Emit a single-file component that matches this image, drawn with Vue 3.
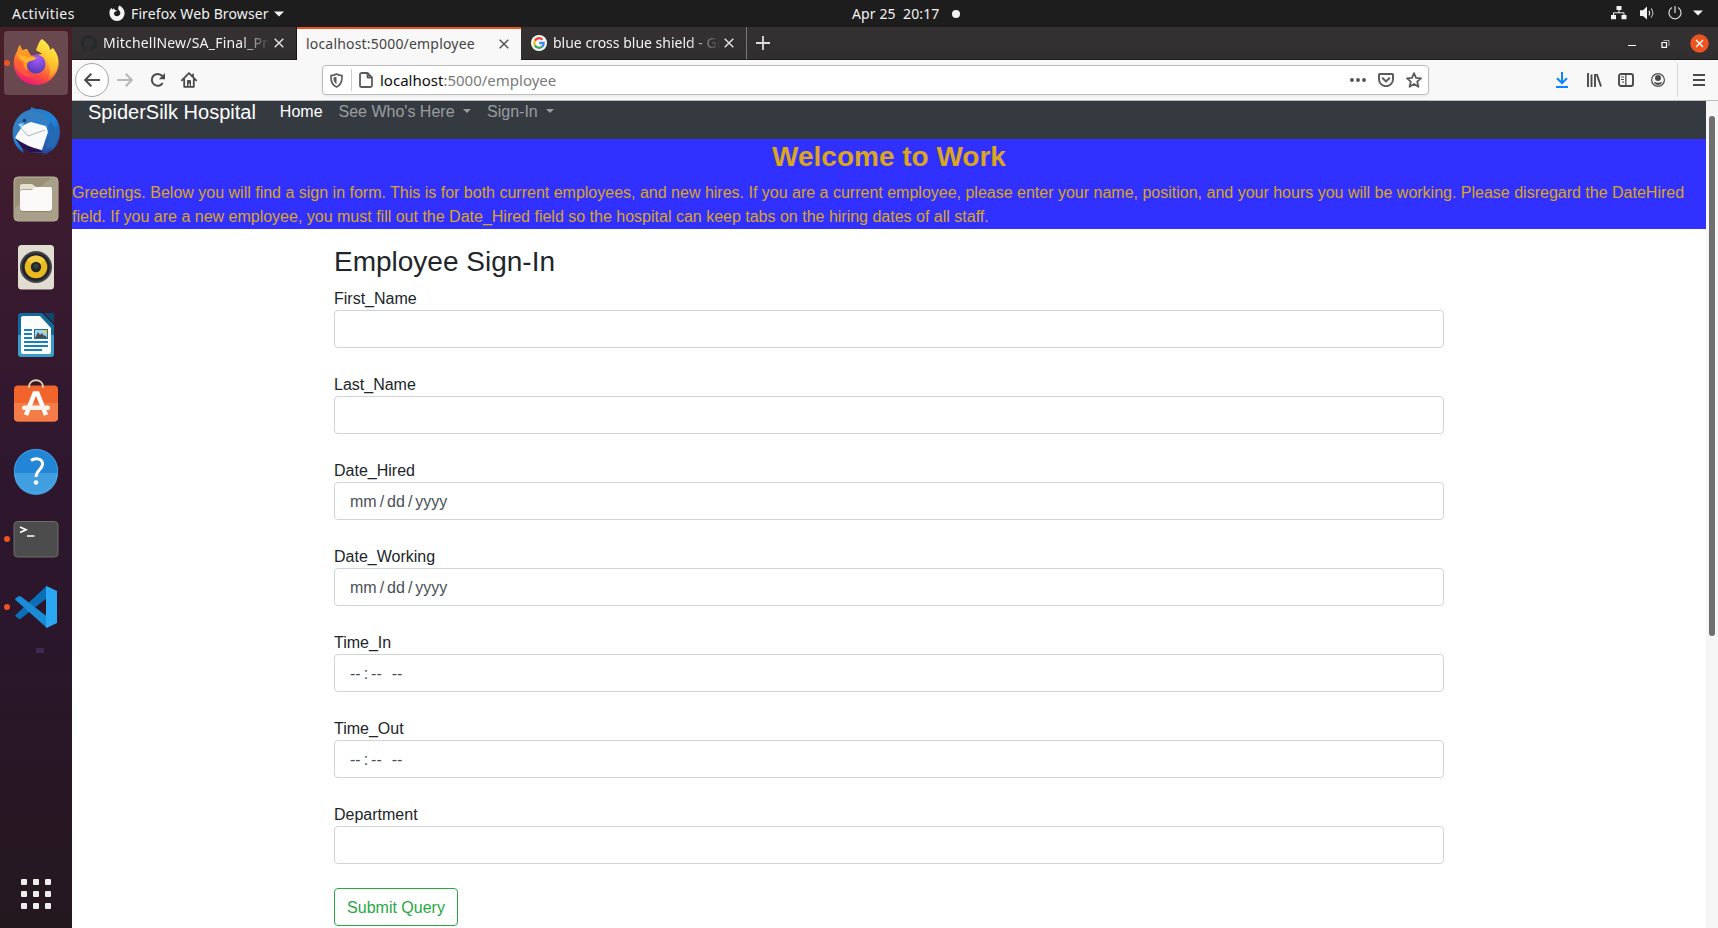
<script setup>
const fields = [
  { label: 'First_Name', parts: [] },
  { label: 'Last_Name', parts: [] },
  { label: 'Date_Hired', parts: ['mm', '/', 'dd', '/', 'yyyy'] },
  { label: 'Date_Working', parts: ['mm', '/', 'dd', '/', 'yyyy'] },
  { label: 'Time_In', parts: ['--', ':', '--', '', '--'] },
  { label: 'Time_Out', parts: ['--', ':', '--', '', '--'] },
  { label: 'Department', parts: [] },
]
</script>

<template>
  <div class="desktop">
    <header class="topbar">
      <span class="activities">Activities</span>
      <svg class="ff-mono" width="16" height="16" viewBox="0 0 16 16">
        <path d="M10.6 0.6C12.2 1.7 15.6 4 15.6 8.3A7.6 7.6 0 0 1 .4 8.3C.4 5.4 1.4 4 2.4 2.8L3.2 4.4 5 3.2 5.6 4.8 8.2 5.8C6.8 6.6 5.2 6.6 5 8.2 4.8 10 6.4 11.4 8.2 11.3 10.4 11.2 11.6 9.4 11.3 7.6 11 6 9.6 5.4 9.2 4 8.9 2.7 9.6 1.4 10.6 .6Z" fill="#f2f2f2" />
      </svg>
      <span class="appname">Firefox Web Browser</span>
      <svg class="app-caret" width="10" height="6" viewBox="0 0 10 6"><path d="M0 .5H10L5 5.5Z" fill="#f2f2f2" /></svg>
      <span class="clock">Apr 25&nbsp; 20:17</span>
      <span class="notify"></span>
      <div class="status">
        <svg width="16" height="14" viewBox="0 0 16 14">
          <path d="M5.5 0h5v4h-5zM0 9h5v4.200H0zM10.500 9h5v4.200h-5z" fill="#f2f2f2" />
          <path d="M8 4v2.800M2.500 9V6.800H13V9" fill="none" stroke="#f2f2f2" />
        </svg>
        <svg class="vol" width="16" height="14" viewBox="0 0 16 14">
          <path d="M0 4.300H3L7 .4V13.600L3 10H0Z" fill="#f2f2f2" />
          <path d="M9 4.800Q10.500 7 9 9.300" fill="none" stroke="#f2f2f2" stroke-width="1.200" />
          <path d="M11 2.500Q14.800 7 11 11.600" fill="none" stroke="#aaa" stroke-width="1.200" />
        </svg>
        <svg class="power" width="14" height="14" viewBox="0 0 14 14">
          <path d="M4 1.600A6 6 0 1 0 10 1.600M7 0V7" fill="none" stroke="#ddd" stroke-width="1.200" />
        </svg>
        <svg class="st-caret" width="10" height="6" viewBox="0 0 10 6"><path d="M0 .5H10L5 5.500Z" fill="#f2f2f2" /></svg>
      </div>
    </header>

    <div class="main">
      <aside class="dock">
        <!-- Firefox -->
        <div class="app active running">
          <svg width="72" height="68" viewBox="0 0 72 68">
            <defs>
              <linearGradient id="ffb" x1=".8" y1="0" x2=".3" y2="1"><stop offset="0" stop-color="#fff34a" /><stop offset=".35" stop-color="#ffb02e" /><stop offset=".65" stop-color="#ff5a36" /><stop offset="1" stop-color="#e8127b" /></linearGradient>
              <radialGradient id="ffg" cx=".6" cy=".2" r=".9"><stop offset="0" stop-color="#a75cf5" /><stop offset="1" stop-color="#4a36b5" /></radialGradient>
              <linearGradient id="fff" x1=".7" y1="0" x2=".4" y2="1"><stop offset="0" stop-color="#fff44f" /><stop offset=".5" stop-color="#ffc930" /><stop offset="1" stop-color="#ff8a2a" /></linearGradient>
            </defs>
            <path d="M20 16L22 21 27 20 31 27 41 25 53 20C58 25 59 31 58.500 36A22.500 22 0 0 1 13.700 36C13.500 28 16 24 18 21Z" fill="url(#ffb)" />
            <path d="M42 10C47 14 50 17 50 21L53 19C61 29 60 42 48 50 52 43 49 39 47 31 44 24 38 23 36 21 38 16 39 12 42 10Z" fill="url(#fff)" />
            <circle cx="36" cy="35" r="9.500" fill="url(#ffg)" />
            <path d="M20 16L22 21 28 22 30 26 36.500 28.500C35 32 30 31 28 33 26 36 28 39 27 42 23 38 21 30 17 25 17 21 18 18 20 16Z" fill="#ff9824" />
            <path d="M18 25C24 27 28 29 36.500 28.500 34 32 29 31 27.500 34 22 33 19 30 18 25Z" fill="#ffb42c" />
            <path d="M14 31C16 46 27 50 39 47 32 49 23 44 24 32Z" fill="#ff6632" opacity=".6" />
          </svg>
        </div>
        <!-- Thunderbird -->
        <div class="app">
          <svg width="72" height="68" viewBox="0 0 72 68">
            <defs><linearGradient id="tb" x1=".2" y1="0" x2=".8" y2="1"><stop offset="0" stop-color="#2c77bd" /><stop offset=".5" stop-color="#2183d9" /><stop offset="1" stop-color="#273c91" /></linearGradient></defs>
            <path d="M13 31C11 43 16 51 24 56L22 51 29 55 45 56 42 58C53 56 60 47 60 35 60 20 49 12 36 12L31 10 31 12 26 14C18 18 15 24 13 31Z" fill="url(#tb)" />
            <path d="M15 41L22 51 29 55 43 55 33 50Z" fill="#2a1250" />
            <path d="M15 41L22 28 31 25 46 29 48 35 42 53Q27 50 15 41Z" fill="#f8f9fa" />
            <path d="M20 30L28 39 45 33" fill="none" stroke="#aaa" stroke-width=".9" />
            <path d="M13 32C15 21 23 14 33 14 44 15 49 23 48 31 42 23 33 22 28 26L22 29 20 33 15 39Z" fill="#347fc2" />
            <path d="M48 29C51 35 50 42 45 50L48 49 46 54 52 49 51 54 58 46 56 47 60 37 58 39 59 28 55 33 51 24Z" fill="#2469b4" />
            <circle cx="24.500" cy="23.500" r="1.700" fill="#17386c" /><path d="M18 27L24 26 21 31Z" fill="#8bd3f5" />
          </svg>
        </div>
        <!-- Files -->
        <div class="app">
          <svg width="72" height="68" viewBox="0 0 72 68">
            <rect x="14" y="12" width="44" height="44" rx="4" fill="#989078" stroke="#beb79e" />
            <path d="M15 43L51 13H54Q57 13 57 16V52Q57 55 54 55H18Q15 55 15 52Z" fill="#a8a08a" />
            <path d="M20 21Q20 19 22 19H32L36 22V30H20Z" fill="#e4dfcf" />
            <rect x="20" y="24" width="32" height="23" rx="3" fill="#605747" opacity=".4" />
            <path d="M20 27Q20 25 23 25H32L35 22H50Q52 22 52 24V43Q52 46 49 46H23Q20 46 20 43Z" fill="#faf9f8" />
          </svg>
        </div>
        <!-- Rhythmbox -->
        <div class="app">
          <svg width="72" height="68" viewBox="0 0 72 68">
            <rect x="18" y="12" width="36" height="44.500" rx="3.500" fill="#e1ddd0" />
            <circle cx="36" cy="34" r="16" fill="#44454c" /><circle cx="36" cy="34" r="14" fill="#23242c" />
            <circle cx="36" cy="34" r="11.300" fill="#e9b91f" /><path d="M27 27A11.300 11.300 0 0 1 45 27L36 34Z" fill="#f2cc42" />
            <circle cx="36" cy="34" r="5.200" fill="#24272a" /><circle cx="36" cy="33" r="2.500" fill="#3b3d3f" />
          </svg>
        </div>
        <!-- LibreOffice Writer -->
        <div class="app">
          <svg width="72" height="68" viewBox="0 0 72 68">
            <defs><linearGradient id="wr" x1="0" y1="0" x2="0" y2="1"><stop offset=".5" stop-color="#126a9c" /><stop offset=".5" stop-color="#3b9cc9" /></linearGradient></defs>
            <path d="M21 12H42L54 24V53Q54 56 51 56H21Q18 56 18 53V15Q18 12 21 12Z" fill="url(#wr)" />
            <path d="M44 12H52Q54 12 54 14V22Z" fill="#0e496c" />
            <path d="M23 15H40L51 27V51Q51 53 49 53H23Q21 53 21 51V17Q21 15 23 15Z" fill="#fbfcfc" />
            <path d="M24 29H32M24 33H32M24 37H32M24 41H48M24 45H48M24 49H42" stroke="#1d7fb2" stroke-width="2" />
            <rect x="34.500" y="28.500" width="13" height="9" fill="#a5d3ed" stroke="#1d6f9f" />
            <path d="M35 37L38 31 40 34 42 32 44 35 45 34 47 37Z" fill="#4a4a48" /><path d="M43 29H47V33Z" fill="#f2c81c" />
          </svg>
        </div>
        <!-- Software store -->
        <div class="app">
          <svg width="72" height="68" viewBox="0 0 72 68">
            <rect x="14" y="16.500" width="44" height="36" rx="4" fill="#f1652c" />
            <path d="M14 34H58V48.500Q58 52.500 54 52.500H18Q14 52.500 14 48.500Z" fill="#f47c49" />
            <path d="M29 19V18C29 9 43 9 43 18V19" fill="none" stroke="#e9cfa5" stroke-width="1.800" />
            <path d="M26 46L34.500 24.500H37.500L46 46" fill="none" stroke="#fff" stroke-width="4.500" />
            <rect x="22" y="36.500" width="28" height="4.500" rx="2.200" fill="#fff2ec" />
          </svg>
        </div>
        <!-- Help -->
        <div class="app">
          <svg width="72" height="68" viewBox="0 0 72 68">
            <circle cx="36" cy="34" r="22" fill="#2385d5" /><path d="M14 36H58A22 22 0 0 1 14 36Z" fill="#419fe0" />
            <circle cx="36" cy="34" r="21.700" fill="none" stroke="#54a9e5" stroke-width=".7" />
            <path d="M31 23.500C36 20 43 22 42.500 27.500 42 32.500 36 33.500 36 40" fill="none" stroke="#fff" stroke-width="3" /><circle cx="36" cy="45.500" r="2.300" fill="#fff" />
          </svg>
        </div>
        <!-- Terminal -->
        <div class="app running">
          <svg width="72" height="68" viewBox="0 0 72 68">
            <rect x="14" y="16.500" width="44" height="35.500" rx="3.500" fill="#4c4c4c" stroke="#6c6c6a" />
            <path d="M20 22L26 24.700 20 27.500" fill="none" stroke="#fff" stroke-width="1.700" /><path d="M27 31H34.500" stroke="#fff" stroke-width="1.500" />
          </svg>
        </div>
        <!-- VS Code -->
        <div class="app running">
          <svg width="72" height="68" viewBox="0 0 72 68">
            <path d="M15.500 42L46 13.500 47 25 21 45.500Q19 47 17.500 45L15.500 43Q15 42.500 15.500 42Z" fill="#0a6fb4" />
            <path d="M15.500 27Q15 26 15.500 25.500L18 23.500Q19.500 22.500 21 23.500L47 43.500V55Z" fill="#1a8cd5" />
            <path d="M46.500 13L57 18V50L46.500 55Q46 55 46 54V14Q46 13 46.500 13Z" fill="#2aa8f2" />
          </svg>
        </div>
        <span class="ghost"></span>
        <div class="grid"><i v-for="n in 9" :key="n"></i></div>
      </aside>

      <section class="browser">
        <div class="tabs">
          <div class="tab t1">
            <svg width="16" height="16" viewBox="0 0 16 16"><path d="M8 0C3.580 0 0 3.580 0 8c0 3.540 2.290 6.530 5.470 7.590.4.070.55-.17.55-.38 0-.19-.01-.82-.01-1.490-2.010.37-2.530-.49-2.690-.94-.09-.23-.48-.94-.82-1.130-.28-.15-.68-.52-.01-.53.63-.01 1.080.58 1.230.82.72 1.210 1.870.87 2.330.66.07-.52.28-.87.51-1.070-1.780-.2-3.640-.89-3.640-3.950 0-.87.31-1.590.82-2.150-.08-.2-.36-1.020.08-2.120 0 0 .67-.21 2.200.82.64-.18 1.320-.27 2-.27s1.360.09 2 .27c1.530-1.040 2.200-.82 2.200-.82.44 1.100.16 1.920.08 2.120.51.56.82 1.270.82 2.150 0 3.070-1.870 3.750-3.650 3.950.29.25.54.73.54 1.480 0 1.070-.01 1.930-.01 2.200 0 .21.15.46.55.38A8 8 0 0 0 16 8c0-4.420-3.580-8-8-8Z" fill="#24292e" /></svg>
            <span class="title">MitchellNew/SA_Final_Pr</span>
            <svg class="x" width="10" height="10" viewBox="0 0 10 10"><path d="M.7.7 9.300 9.300M9.300.7.7 9.300" stroke="#ddd" stroke-width="1.500" /></svg>
          </div>
          <div class="tab t2">
            <span class="title">localhost:5000/employee</span>
            <svg class="x" width="10" height="10" viewBox="0 0 10 10"><path d="M.7.7 9.300 9.300M9.300.7.7 9.300" stroke="#555" stroke-width="1.500" /></svg>
          </div>
          <div class="tab t3">
            <svg width="16" height="16" viewBox="0 0 16 16">
              <circle cx="8" cy="8" r="8" fill="#fff" />
              <g fill="none" stroke-width="2.300"><path d="M3.900 5.600A4.800 4.800 0 0 1 11.500 4.700" stroke="#ea4335" /><path d="M3.900 10.400A4.800 4.800 0 0 1 3.900 5.600" stroke="#fbbc05" /><path d="M11.200 11.600A4.800 4.800 0 0 1 3.900 10.400" stroke="#34a853" /><path d="M8.200 8H12.700Q12.700 10.400 11.200 11.600" stroke="#4285f4" /></g>
            </svg>
            <span class="title">blue cross blue shield - Go</span>
            <svg class="x" width="10" height="10" viewBox="0 0 10 10"><path d="M.7.7 9.300 9.300M9.300.7.7 9.300" stroke="#ddd" stroke-width="1.500" /></svg>
          </div>
          <svg class="plus" width="14" height="14" viewBox="0 0 14 14"><path d="M7 0V14M0 7H14" stroke="#ddd" stroke-width="1.800" /></svg>
          <div class="winctl">
            <svg width="8" height="9" viewBox="0 0 8 9"><path d="M0 6.500H8" stroke="#fff" /></svg>
            <svg class="restore" width="9" height="8" viewBox="0 0 9 8"><path d="M1 2.500H5.500V7.300H1Z" fill="none" stroke="#fff" stroke-width="1.200" /><path d="M2.500.5H8V6" fill="none" stroke="#aaa" /></svg>
            <svg class="close" width="19" height="19" viewBox="0 0 19 19"><circle cx="9.500" cy="9.500" r="9.200" fill="#e95420" /><path d="M6 6 13 13M13 6 6 13" stroke="#fff" stroke-width="1.400" /></svg>
          </div>
        </div>

        <div class="toolbar">
          <div class="back"><svg width="16" height="14" viewBox="0 0 16 14"><path d="M16 7H1.500M7.300.8 1.200 7 7.300 13.200" fill="none" stroke="#4a4a4a" stroke-width="2" /></svg></div>
          <svg class="fwd" width="16" height="14" viewBox="0 0 16 14"><path d="M0 7H14.500M8.700.8 14.800 7 8.700 13.200" fill="none" stroke="#b8b8b8" stroke-width="2" /></svg>
          <svg class="reload" width="16" height="16" viewBox="0 0 16 16"><path d="M12.200 4A5.900 5.900 0 1 0 12.700 11" fill="none" stroke="#4a4a4a" stroke-width="2" /><path d="M15 1V7.200H8.800Z" fill="#4a4a4a" /></svg>
          <svg class="home" width="16" height="16" viewBox="0 0 16 16"><path d="M.8 8.300 8 1.200 15.200 8.300M3.200 7.500V14.800H12.800V7.500M12 5V2.500" fill="none" stroke="#4a4a4a" stroke-width="1.800" stroke-linejoin="round" stroke-linecap="round" /><path d="M6 14V9Q6 8 7 8H9Q10 8 10 9V14H8.800V11.500H7.500V14Z" fill="#4a4a4a" /></svg>
          <div class="urlbar">
            <svg width="13" height="15" viewBox="0 0 13 15"><path d="M6.500 1Q9 2.500 12 2.600C12.300 8 11 12 6.500 14 2 12 .7 8 1 2.600 4 2.500 6.500 1 6.500 1Z" fill="none" stroke="#5c5c5c" stroke-width="1.600" /><path d="M6.500 3.800V11.200C4 9.500 3.400 7.500 3.500 4.600Z" fill="#5c5c5c" /></svg>
            <span class="usep"></span>
            <svg width="14" height="16" viewBox="0 0 14 16"><path d="M3 1H8.500L13 5.500V13.500Q13 15 11.500 15H2.500Q1 15 1 13.500V2.500Q1 1 3 1ZM8.500 1V5.500H13" fill="none" stroke="#5c5c5c" stroke-width="1.800" stroke-linejoin="round" /></svg>
            <span class="url"><b>localhost</b><span>:5000/employee</span></span>
            <svg class="dots" width="16" height="4" viewBox="0 0 16 4"><g fill="#4f4f4f"><circle cx="2" cy="2" r="1.900" /><circle cx="8" cy="2" r="1.900" /><circle cx="14" cy="2" r="1.900" /></g></svg>
            <svg class="pocket" width="16" height="14" viewBox="0 0 16 14"><path d="M1 1.800Q1 1 1.800 1H14.200Q15 1 15 1.800V6.200A7 7 0 0 1 1 6.200ZM4.700 5.200 8 8.400 11.300 5.200" fill="none" stroke="#5c5c5c" stroke-width="2" stroke-linecap="round" /></svg>
            <svg class="star" width="16" height="16" viewBox="0 0 16 16"><path d="M8 1.200 10 5.800 15 6.300 11.200 9.600 12.400 14.800 8 12 3.600 14.800 4.800 9.600 1 6.300 6 5.800Z" fill="none" stroke="#5c5c5c" stroke-width="1.800" stroke-linejoin="round" /></svg>
          </div>
          <div class="tools">
            <svg width="12" height="16" viewBox="0 0 12 16"><path d="M6 0V11M1 6.200 6 11.200 11 6.200M0 15H12" fill="none" stroke="#0a84ff" stroke-width="2" /></svg>
            <svg class="lib" width="15" height="14" viewBox="0 0 15 14"><path d="M1 0V14M4.500 1.500V14M8 1V14M9.700 1 14 13.500" fill="none" stroke="#4a4a4a" stroke-width="1.900" /></svg>
            <svg class="side" width="16" height="14" viewBox="0 0 16 14"><rect x="1" y="1" width="14" height="12" rx="2" fill="none" stroke="#4a4a4a" stroke-width="1.900" /><path d="M7.800 1V13" stroke="#4a4a4a" stroke-width="1.300" /><path d="M3 4H6M3 6.500H6M4 9H6" stroke="#4a4a4a" /></svg>
            <svg class="acct" width="14" height="14" viewBox="0 0 14 14"><circle cx="7" cy="7" r="6.400" fill="none" stroke="#4a4a4a" stroke-width="1.200" /><circle cx="7" cy="5.100" r="3" fill="#4a4a4a" /><path d="M2.800 8.800Q7 10.800 11.200 8.800 10 12 7 12T2.800 8.800Z" fill="#4a4a4a" /></svg>
            <span class="tsep"></span>
            <svg class="menu" width="12" height="12" viewBox="0 0 12 12"><path d="M0 1H12M0 6H12M0 11H12" stroke="#4a4a4a" stroke-width="1.900" /></svg>
          </div>
        </div>

        <div class="viewport">
          <div class="page">
            <div class="navclip">
              <nav class="navbar">
                <span class="brand">SpiderSilk Hospital</span>
                <span class="link on">Home</span>
                <span class="link drop">See Who's Here </span>
                <span class="link drop">Sign-In </span>
              </nav>
            </div>
            <div class="banner">
              <h3>Welcome to Work</h3>
              <p>Greetings. Below you will find a sign in form. This is for both current employees, and new hires. If you are a current employee, please enter your name, position, and your hours you will be working. Please disregard the DateHired<br>field. If you are a new employee, you must fill out the Date_Hired field so the hospital can keep tabs on the hiring dates of all staff.</p>
            </div>
            <form class="container" @submit.prevent>
              <h3>Employee Sign-In</h3>
              <div v-for="f in fields" :key="f.label" class="group">
                <label>{{ f.label }}</label>
                <div class="control"><span v-for="(p, i) in f.parts" :key="i" :class="{ blank: !p }">{{ p }}</span></div>
              </div>
              <button class="submit">Submit Query</button>
            </form>
          </div>
          <div class="scroll"><div class="thumb"></div></div>
        </div>
      </section>
    </div>
  </div>
</template>

<style>
html, body { margin: 0; overflow: hidden; }
</style>

<style scoped>
* { box-sizing: border-box; }
svg { display: block; flex: none; }
.desktop { width: 1718px; height: 928px; display: flex; flex-direction: column; overflow: hidden; font-family: "Noto Sans", sans-serif; font-size: 14px; }
.topbar { position: relative; height: 27px; flex: none; background: #1d1d1d; color: #f2f2f2; display: flex; align-items: center; white-space: nowrap; padding-left: 12px; }
.activities { width: 97px; letter-spacing: .45px; }
.ff-mono { margin-right: 6px; margin-top: -1px; }
.appname { width: 143px; letter-spacing: .12px; }
.clock { margin-left: 568px; width: 100px; letter-spacing: .1px; }
.notify { width: 8px; height: 8px; border-radius: 50%; background: #f2f2f2; }
.status { margin-left: auto; display: flex; align-items: center; padding-right: 15px; margin-top: -1px; }
.vol { margin-left: 13px; }
.power { margin-left: 12px; }
.st-caret { margin-left: 11px; }

.main { flex: 1; display: flex; min-height: 0; }
.dock { width: 72px; flex: none; padding-top: 2px; display: flex; flex-direction: column; background: linear-gradient(#471f27 0, #3b1b2f 200px, #2f172e 420px, #2a162a 620px, #24181f 100%); }
.app { height: 68px; flex: none; position: relative; }
.app svg { position: relative; }
.active::before { content: ""; position: absolute; left: 4px; top: 2px; width: 64px; height: 64px; border-radius: 4px; background: #6a484f; }
.running::after { content: ""; position: absolute; left: 4px; top: 31px; width: 6px; height: 6px; border-radius: 50%; background: #e95420; }
.ghost { width: 8px; height: 5px; margin: 7px 0 0 36px; background: #3a2a4d; }
.grid { margin: auto 21px 19px; display: grid; grid-template-columns: repeat(3, 6px); gap: 6px; }
.grid i { height: 6px; border-radius: 1px; background: #eee; }

.browser { flex: 1; min-width: 0; display: flex; flex-direction: column; }
.tabs { height: 33px; flex: none; display: flex; background: linear-gradient(#353132, #302e2f); border-bottom: 1px solid #1b1b1b; color: #f2f2f2; }
.tab { display: flex; align-items: center; white-space: nowrap; height: 33px; }
.title { flex: none; line-height: 20px; }
.t1 { width: 225px; padding-left: 9px; border-right: 1px solid #151515; border-bottom: 1px solid #1b1b1b; }
.t1 .title { margin-left: 6px; width: 176px; letter-spacing: .2px; -webkit-mask-image: linear-gradient(90deg, #000 138px, transparent 168px); mask-image: linear-gradient(90deg, #000 138px, transparent 168px); }
.t1 .x { margin-left: -5px; }
.t2 { width: 224px; padding-left: 9px; border-top: 2px solid #e95420; background: #f8f8f8; color: #444; }
.t2 .title { width: 193px; margin-top: -2px; letter-spacing: .19px; }
.t2 .x { margin-top: -1px; }
.t3 { width: 226px; padding-left: 10px; border-right: 1px solid #777; border-bottom: 1px solid #1b1b1b; }
.t3 .title { margin-left: 6px; width: 180px; -webkit-mask-image: linear-gradient(90deg, #000 135px, transparent 168px); mask-image: linear-gradient(90deg, #000 135px, transparent 168px); }
.t3 .x { margin-left: -9px; }
.plus { margin: 9px 0 0 9px; }
.winctl { margin: 1px 9px 0 auto; display: flex; align-items: center; }
.restore { margin-left: 25px; }
.close { margin-left: 20px; }

.toolbar { height: 41px; flex: none; display: flex; align-items: center; background: #f8f8f8; border-bottom: 1px solid #bdbdbd; }
.back { width: 34px; height: 34px; margin-left: 3px; border: 1px solid #a5a5a5; border-radius: 50%; background: #fff; display: flex; align-items: center; justify-content: center; }
.fwd { margin-left: 8px; }
.reload { margin-left: 17px; }
.home { margin-left: 15px; }
.urlbar { margin-left: 125px; width: 1107px; height: 30px; border: 1px solid #bcbcbc; border-radius: 4px; background: #fff; display: flex; align-items: center; padding: 0 6px 0 7px; box-shadow: 0 1px 3px rgba(0, 0, 0, .08); }
.usep { width: 1px; height: 22px; background: #ccc; margin: 0 7px 0 8px; }
.url { margin-left: 7px; color: #7a7a7a; font-size: 15px; line-height: 20px; }
.url b { font-weight: 400; color: #0c0c0c; }
.dots { margin-left: auto; }
.pocket { margin-left: 12px; }
.star { margin-left: 12px; }
.tools { margin-left: auto; display: flex; align-items: center; padding-right: 13px; }
.lib { margin-left: 19px; }
.side { margin-left: 16px; }
.acct { margin-left: 17px; }
.tsep { width: 1px; height: 34px; background: #d5d5d5; margin-left: 12px; }
.menu { margin-left: 15px; }

.viewport { flex: 1; min-height: 0; display: flex; background: #fff; }
.page { width: 1634px; font-family: "Liberation Sans", Arial, sans-serif; font-size: 16px; line-height: 24px; color: #212529; overflow: hidden; }
.navclip { height: 38px; overflow: hidden; background: #343a40; }
.navbar { height: 56px; margin-top: -17px; padding: 0 16px; display: flex; align-items: center; white-space: pre; }
.brand { font-size: 20px; line-height: 30px; color: #fff; margin-right: 16px; }
.link { padding: 8px; color: rgba(255, 255, 255, .5); }
.on { color: #fff; }
.drop::after { content: ""; display: inline-block; margin-left: .255em; vertical-align: .255em; border-top: .3em solid; border-right: .3em solid transparent; border-left: .3em solid transparent; }
.banner { height: 90px; background: #3131ff; color: #daa520; }
h3 { margin: 0; font-size: 28px; line-height: 33.600px; font-weight: 400; }
.banner h3 { font-weight: 700; text-align: center; padding: 1px 0 7px; }
.banner p { margin: 0; white-space: nowrap; }
.container { width: 1110px; margin: 0 auto; padding-top: 16px; }
.container h3 { height: 41px; }
.group { margin-bottom: 24px; }
.group label { display: block; padding-top: 2px; line-height: 22px; }
.control { height: 38px; border: 1px solid #ced4da; border-radius: 4px; padding: 2px 15px 0; display: flex; align-items: center; gap: 3px; color: #495057; }
.blank { width: 4px; }
.submit { display: block; width: 124px; height: 38px; padding: 2px 0 0; border: 1px solid #28a745; border-radius: 4px; background: #fff; color: #28a745; font: 16px/24px "Liberation Sans", Arial, sans-serif; }
.scroll { width: 12px; background: #f6f6f6; padding: 15px 3px 0; }
.thumb { height: 520px; width: 6px; border-radius: 3px; background: #6f6f6f; }
</style>
